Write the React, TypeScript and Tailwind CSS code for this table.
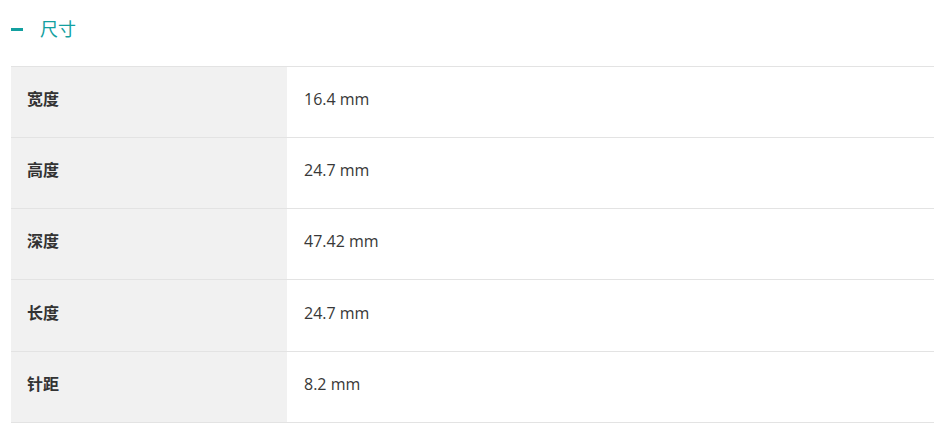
import React from 'react';

const rows = [
  { label: '宽度', value: '16.4 mm' },
  { label: '高度', value: '24.7 mm' },
  { label: '深度', value: '47.42 mm' },
  { label: '长度', value: '24.7 mm' },
  { label: '针距', value: '8.2 mm' },
];

const font = { fontFamily: '"Open Sans", "Noto Sans CJK SC", sans-serif' };

const App: React.FC = () => {
  return (
    <div className="min-h-screen bg-white px-[11px] pt-[17px]" style={font}>
      <div className="flex items-center h-[24px]">
        <span className="block w-[12px] h-[3px] bg-[#13a0a0]"></span>
        <h3 className="ml-[17px] text-[18px] leading-[24px] text-[#13a0a0] font-normal">尺寸</h3>
      </div>

      <div className="mt-[25px] w-[923px] border-t border-[#e3e3e3]">
        {rows.map((row, i) => (
          <div
            key={row.label}
            className={`flex border-b border-[#e3e3e3] ${i === 3 ? 'h-[72px]' : 'h-[71px]'}`}
          >
            <div className="w-[276px] bg-[#f1f1f1] flex items-center pl-[16px] pb-[6px] text-[16px] font-bold text-[#333333]">
              {row.label}
            </div>
            <div className="flex-1 flex items-center pl-[17px] pb-[6px] text-[16px] text-[#383838]">
              {row.value}
            </div>
          </div>
        ))}
      </div>
    </div>
  );
};

export default App;
